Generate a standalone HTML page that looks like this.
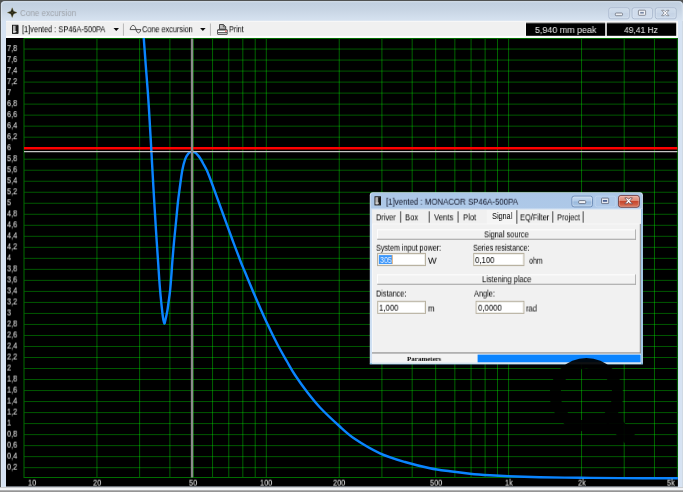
<!DOCTYPE html>
<html><head><meta charset="utf-8"><title>Cone excursion</title>
<style>
html,body{margin:0;padding:0;}
body{width:683px;height:492px;overflow:hidden;position:relative;background:#000;font-family:"Liberation Sans",sans-serif;}
svg{position:absolute;left:0;top:0;}
.t{position:absolute;white-space:nowrap;transform-origin:0 0;display:block;will-change:transform;}
</style></head>
<body>
<svg width="683" height="492" viewBox="0 0 683 492"><defs><linearGradient id="gt" x1="0" y1="0" x2="0" y2="1"><stop offset="0" stop-color="#bfcedf"/><stop offset=".45" stop-color="#c8d5e4"/><stop offset="1" stop-color="#d7e3f1"/></linearGradient><linearGradient id="gs" x1="0" y1="0" x2="0" y2="1"><stop offset="0" stop-color="#b6b6b6"/><stop offset="1" stop-color="#858585"/></linearGradient><linearGradient id="gb" x1="0" y1="0" x2="0" y2="1"><stop offset="0" stop-color="#cfdceb"/><stop offset=".5" stop-color="#c9d7e8"/><stop offset=".52" stop-color="#c5d3e5"/><stop offset="1" stop-color="#cbd9ea"/></linearGradient></defs><path d="M0,488 V0 H683.8 V488z" fill="#505252"/><path d="M0.95,487.3 V4.75 Q0.95,1.15 4.55,1.15 H679.2499999999999 Q682.8499999999999,1.15 682.8499999999999,4.75 V487.3z" fill="#d6e3f3"/><path d="M0.95,21 V4.75 Q0.95,1.15 4.55,1.15 H679.2499999999999 Q682.8499999999999,1.15 682.8499999999999,4.75 V21z" fill="url(#gt)"/><path d="M1.55,487 V5.35 Q1.55,1.75 5.15,1.75 H678.65 Q682.25,1.75 682.25,5.35 V487" fill="none" stroke="#e8eef6" stroke-opacity=".55" stroke-width="1"/><rect x="0.00" y="487.30" width="683.00" height="3.40" fill="#f1f3f6" /><rect x="0.00" y="490.50" width="683.00" height="1.50" fill="url(#gs)" /><rect x="6.00" y="37.00" width="671.90" height="449.50" fill="#000" /><rect x="6.00" y="20.90" width="671.90" height="17.00" fill="#f0f0f0" /><rect x="6.00" y="20.90" width="671.90" height="1.10" fill="#f7f7f7" /><rect x="6.00" y="35.90" width="671.90" height="1.95" fill="#ffffff" /><rect x="524.90" y="21.80" width="153.00" height="16.05" fill="#fafafa" /><rect x="526.00" y="22.30" width="79.20" height="1.30" fill="#9a9a9a" /><rect x="526.00" y="23.30" width="79.20" height="12.50" fill="#000" /><rect x="606.80" y="22.30" width="69.40" height="1.30" fill="#9a9a9a" /><rect x="606.80" y="23.30" width="69.40" height="12.50" fill="#000" /><rect x="608.85" y="7.85" width="20.40" height="10.9" rx="2" fill="url(#gb)" stroke="#a7b6cc" stroke-width="0.9"/><rect x="609.6999999999999" y="8.7" width="18.70" height="9.2" rx="1.3" fill="none" stroke="#e6eef8" stroke-opacity=".55" stroke-width="0.7"/><rect x="632.1500000000001" y="7.85" width="20.20" height="10.9" rx="2" fill="#d0dcec" stroke="#a7b6cc" stroke-width="0.9"/><rect x="633.0" y="8.7" width="18.50" height="9.2" rx="1.3" fill="none" stroke="#e6eef8" stroke-opacity=".55" stroke-width="0.7"/><rect x="655.35" y="7.85" width="20.80" height="10.9" rx="2" fill="url(#gb)" stroke="#a7b6cc" stroke-width="0.9"/><rect x="656.1999999999999" y="8.7" width="19.10" height="9.2" rx="1.3" fill="none" stroke="#e6eef8" stroke-opacity=".55" stroke-width="0.7"/><rect x="615.3" y="13.0" width="7.2" height="2.7" rx="0.9" fill="#eef1f6" stroke="#6a707c" stroke-width="0.8"/><rect x="638.4" y="10.2" width="7.2" height="5.1" rx="0.7" fill="#f2f4f8" stroke="#70747e" stroke-width="0.8"/><rect x="640.2" y="11.9" width="3.6" height="1.7" fill="#7686a4"/><path d="M661.6,10.3 l2.4,0 l1.3,1.4 l1.3,-1.4 l2.4,0 l-2.5,2.7 l2.5,2.7 l-2.4,0 l-1.3,-1.4 l-1.3,1.4 l-2.4,0 l2.5,-2.7z" fill="#fbfbfd" stroke="#7a7e88" stroke-width="0.8" stroke-linejoin="round"/><g transform="translate(12.2,12.6)"><path d="M0,-4.8 L1.35,-1.35 L4.8,0 L1.35,1.35 L0,4.8 L-1.35,1.35 L-4.8,0 L-1.35,-1.35Z" fill="#22221a" stroke="#6e6830" stroke-width="0.4"/><circle r="0.9" fill="#4c481c"/></g><rect x="12.50" y="25.30" width="5.40" height="8.10" fill="#8a8a8a" stroke="#1c1c1c" stroke-width="1"/><rect x="13.00" y="25.80" width="2.30" height="7.10" fill="#b4b4b4"/><rect x="15.69" y="25.80" width="2.56" height="7.10" fill="#1a1a1a"/><rect x="13.20" y="31.10" width="3.20" height="1" fill="#e0e0e0"/><path d="M113.5,27.9 h5.5 l-2.75,3.1z" fill="#0c0c0c"/><path d="M200.1,27.9 h5.5 l-2.75,3.1z" fill="#0c0c0c"/><path d="M130.1,29.6 C131.2,24.0 135.0,24.0 136.0,29.5 C137.0,33.9 139.9,33.9 140.8,29.7 M130.1,29.6 H140.9" fill="none" stroke="#4a4a4a" stroke-width="0.95"/><path d="M219.5,29.2 v-4.7 h3.9 l2.3,2.2 v2.5z" fill="#bdbdbd" stroke="#3a3a3a" stroke-width="0.9"/><path d="M223.3,24.6 v2.3 h2.3" fill="none" stroke="#3a3a3a" stroke-width="0.7"/><rect x="217.2" y="29.2" width="10.4" height="5.6" rx="1" fill="#3a3a3a"/><rect x="218.0" y="30.5" width="8.8" height="1.5" fill="#fff"/><rect x="225.0" y="30.5" width="1.7" height="1.3" fill="#f07070"/><rect x="218.0" y="32.7" width="8.8" height="1.3" fill="#c8c8c8"/><rect x="122.95" y="23.50" width="0.90" height="12.20" fill="#b2b2b2" /><rect x="209.95" y="23.50" width="0.90" height="12.20" fill="#b2b2b2" /><defs><clipPath id="pc"><rect x="6" y="37.9" width="671.9" height="448.6"/></clipPath></defs><g clip-path="url(#pc)"><g stroke="#006200" stroke-width="1" fill="none"><line x1="96.94" y1="38.5" x2="96.94" y2="477.5"/><line x1="139.61" y1="38.5" x2="139.61" y2="477.5"/><line x1="169.88" y1="38.5" x2="169.88" y2="477.5"/><line x1="193.36" y1="38.5" x2="193.36" y2="477.5"/><line x1="212.55" y1="38.5" x2="212.55" y2="477.5"/><line x1="228.77" y1="38.5" x2="228.77" y2="477.5"/><line x1="242.82" y1="38.5" x2="242.82" y2="477.5"/><line x1="255.21" y1="38.5" x2="255.21" y2="477.5"/><line x1="266.30" y1="38.5" x2="266.30" y2="477.5"/><line x1="339.24" y1="38.5" x2="339.24" y2="477.5"/><line x1="381.91" y1="38.5" x2="381.91" y2="477.5"/><line x1="412.18" y1="38.5" x2="412.18" y2="477.5"/><line x1="435.66" y1="38.5" x2="435.66" y2="477.5"/><line x1="454.85" y1="38.5" x2="454.85" y2="477.5"/><line x1="471.07" y1="38.5" x2="471.07" y2="477.5"/><line x1="485.12" y1="38.5" x2="485.12" y2="477.5"/><line x1="497.51" y1="38.5" x2="497.51" y2="477.5"/><line x1="508.60" y1="38.5" x2="508.60" y2="477.5"/><line x1="581.54" y1="38.5" x2="581.54" y2="477.5"/><line x1="624.21" y1="38.5" x2="624.21" y2="477.5"/><line x1="654.48" y1="38.5" x2="654.48" y2="477.5"/></g><g stroke="#005800" stroke-width="1" fill="none" style="mix-blend-mode:screen"><line x1="24.0" y1="467.66" x2="677.4" y2="467.66"/><line x1="24.0" y1="456.64" x2="677.4" y2="456.64"/><line x1="24.0" y1="445.63" x2="677.4" y2="445.63"/><line x1="24.0" y1="434.61" x2="677.4" y2="434.61"/><line x1="24.0" y1="423.59" x2="677.4" y2="423.59"/><line x1="24.0" y1="412.58" x2="677.4" y2="412.58"/><line x1="24.0" y1="401.56" x2="677.4" y2="401.56"/><line x1="24.0" y1="390.55" x2="677.4" y2="390.55"/><line x1="24.0" y1="379.53" x2="677.4" y2="379.53"/><line x1="24.0" y1="368.51" x2="677.4" y2="368.51"/><line x1="24.0" y1="357.50" x2="677.4" y2="357.50"/><line x1="24.0" y1="346.48" x2="677.4" y2="346.48"/><line x1="24.0" y1="335.47" x2="677.4" y2="335.47"/><line x1="24.0" y1="324.45" x2="677.4" y2="324.45"/><line x1="24.0" y1="313.43" x2="677.4" y2="313.43"/><line x1="24.0" y1="302.42" x2="677.4" y2="302.42"/><line x1="24.0" y1="291.40" x2="677.4" y2="291.40"/><line x1="24.0" y1="280.39" x2="677.4" y2="280.39"/><line x1="24.0" y1="269.37" x2="677.4" y2="269.37"/><line x1="24.0" y1="258.35" x2="677.4" y2="258.35"/><line x1="24.0" y1="247.34" x2="677.4" y2="247.34"/><line x1="24.0" y1="236.32" x2="677.4" y2="236.32"/><line x1="24.0" y1="225.31" x2="677.4" y2="225.31"/><line x1="24.0" y1="214.29" x2="677.4" y2="214.29"/><line x1="24.0" y1="203.27" x2="677.4" y2="203.27"/><line x1="24.0" y1="192.26" x2="677.4" y2="192.26"/><line x1="24.0" y1="181.24" x2="677.4" y2="181.24"/><line x1="24.0" y1="170.23" x2="677.4" y2="170.23"/><line x1="24.0" y1="159.21" x2="677.4" y2="159.21"/><line x1="24.0" y1="148.19" x2="677.4" y2="148.19"/><line x1="24.0" y1="137.18" x2="677.4" y2="137.18"/><line x1="24.0" y1="126.16" x2="677.4" y2="126.16"/><line x1="24.0" y1="115.15" x2="677.4" y2="115.15"/><line x1="24.0" y1="104.13" x2="677.4" y2="104.13"/><line x1="24.0" y1="93.11" x2="677.4" y2="93.11"/><line x1="24.0" y1="82.10" x2="677.4" y2="82.10"/><line x1="24.0" y1="71.08" x2="677.4" y2="71.08"/><line x1="24.0" y1="60.07" x2="677.4" y2="60.07"/><line x1="24.0" y1="49.05" x2="677.4" y2="49.05"/></g><rect x="24.0" y="38.5" width="653.4" height="439.0" stroke="#006c00" stroke-width="1" fill="none"/><line x1="24.0" y1="148.3" x2="677.4" y2="148.3" stroke="#ff0000" stroke-width="2.6"/><path d="M143.60,36.00C143.97,41.00 145.07,56.27 145.80,66.00C146.53,75.73 147.37,85.40 148.00,94.40C148.63,103.40 149.07,111.07 149.60,120.00C150.13,128.93 150.68,138.83 151.20,148.00C151.72,157.17 152.20,166.17 152.70,175.00C153.20,183.83 153.63,191.50 154.20,201.00C154.77,210.50 155.45,221.83 156.10,232.00C156.75,242.17 157.57,254.00 158.10,262.00C158.63,270.00 158.95,275.10 159.30,280.00C159.65,284.90 159.87,287.57 160.20,291.40C160.53,295.23 160.93,299.40 161.30,303.00C161.67,306.60 162.07,310.25 162.40,313.00C162.73,315.75 162.98,317.73 163.30,319.50C163.62,321.27 163.97,323.43 164.30,323.60C164.63,323.77 164.97,321.77 165.30,320.50C165.63,319.23 165.93,317.75 166.30,316.00C166.67,314.25 167.10,312.50 167.50,310.00C167.90,307.50 168.28,304.10 168.70,301.00C169.12,297.90 169.55,295.73 170.00,291.40C170.45,287.07 171.02,279.90 171.40,275.00C171.78,270.10 171.83,267.83 172.30,262.00C172.77,256.17 173.55,247.00 174.20,240.00C174.85,233.00 175.57,226.42 176.20,220.00C176.83,213.58 177.43,206.67 178.00,201.50C178.57,196.33 178.88,194.20 179.60,189.00C180.32,183.80 181.38,175.25 182.30,170.30C183.22,165.35 184.12,162.05 185.10,159.30C186.08,156.55 187.25,155.03 188.20,153.80C189.15,152.57 190.07,152.25 190.80,151.90C191.53,151.55 191.90,151.58 192.60,151.70C193.30,151.82 194.10,151.98 195.00,152.60C195.90,153.22 197.07,154.33 198.00,155.40C198.93,156.47 199.77,157.70 200.60,159.00C201.43,160.30 201.95,161.27 203.00,163.20C204.05,165.13 205.32,166.97 206.90,170.60C208.48,174.23 209.90,178.02 212.50,185.00C215.10,191.98 219.17,203.33 222.50,212.50C225.83,221.67 229.42,231.67 232.50,240.00C235.58,248.33 238.92,257.17 241.00,262.50C243.08,267.83 242.67,266.42 245.00,272.00C247.33,277.58 251.46,287.75 255.00,296.00C258.54,304.25 262.50,313.42 266.25,321.50C270.00,329.58 274.04,337.83 277.50,344.50C280.96,351.17 284.08,356.42 287.00,361.50C289.92,366.58 291.58,369.83 295.00,375.00C298.42,380.17 303.33,387.08 307.50,392.50C311.67,397.92 314.79,402.00 320.00,407.50C325.21,413.00 332.92,420.25 338.75,425.50C344.58,430.75 348.12,434.37 355.00,439.00C361.88,443.63 371.67,449.47 380.00,453.30C388.33,457.13 396.67,459.52 405.00,462.00C413.33,464.48 422.50,466.65 430.00,468.20C437.50,469.75 443.33,470.38 450.00,471.30C456.67,472.22 463.33,473.03 470.00,473.70C476.67,474.37 483.58,474.87 490.00,475.30C496.42,475.73 500.17,475.98 508.50,476.30C516.83,476.62 527.92,476.95 540.00,477.20C552.08,477.45 567.67,477.65 581.00,477.80C594.33,477.95 608.50,478.03 620.00,478.10C631.50,478.18 640.33,478.22 650.00,478.25C659.67,478.28 673.33,478.29 678.00,478.30" fill="none" stroke="#0a84ff" stroke-width="2.4" stroke-linejoin="round" stroke-linecap="butt"/><line x1="24.0" y1="151.6" x2="677.4" y2="151.6" stroke="#c4c4c4" stroke-width="1.1"/><line x1="192.0" y1="38.5" x2="192.0" y2="477.5" stroke="#8a8a8a" stroke-width="2.3"/></g></svg>
<span class="t" style="left:20.40px;top:7px;font-size:9.3px;line-height:12px;color:#9fa4ab;font-family:'Liberation Sans',sans-serif;transform:translateY(0.05px) scale(0.8697,1.05);">Cone excursion</span>
<span class="t" style="left:22.20px;top:23px;font-size:9.3px;line-height:12px;color:#000;font-family:'Liberation Sans',sans-serif;transform:translateY(0.25px) scale(0.7920,1.05);">[1]vented : SP46A-500PA</span>
<span class="t" style="left:142.10px;top:23px;font-size:9.3px;line-height:12px;color:#000;font-family:'Liberation Sans',sans-serif;transform:translateY(0.25px) scale(0.7846,1.05);">Cone excursion</span>
<span class="t" style="left:229.30px;top:23px;font-size:9.3px;line-height:12px;color:#000;font-family:'Liberation Sans',sans-serif;transform:translateY(0.25px) scale(0.7635,1.05);">Print</span>
<span class="t" style="left:534.60px;top:23px;font-size:9.9px;line-height:13px;color:#dadada;font-family:'Liberation Sans',sans-serif;transform:translateY(0.00px) scale(0.8998,1.0);-webkit-text-stroke:0.12px #dadada;">5,940 mm peak</span>
<span class="t" style="left:624.20px;top:23px;font-size:9.9px;line-height:13px;color:#dadada;font-family:'Liberation Sans',sans-serif;transform:translateY(0.00px) scale(0.8580,1.0);-webkit-text-stroke:0.12px #dadada;">49,41 Hz</span>
<span class="t" style="left:7.40px;top:460px;font-size:9.3px;line-height:12px;color:#d2d2d2;font-family:'Liberation Sans',sans-serif;transform:translateY(0.69px) scale(0.7900,1.03);-webkit-text-stroke:0.15px #d2d2d2;">0,2</span>
<span class="t" style="left:7.40px;top:449px;font-size:9.3px;line-height:12px;color:#d2d2d2;font-family:'Liberation Sans',sans-serif;transform:translateY(0.67px) scale(0.7900,1.03);-webkit-text-stroke:0.15px #d2d2d2;">0,4</span>
<span class="t" style="left:7.40px;top:438px;font-size:9.3px;line-height:12px;color:#d2d2d2;font-family:'Liberation Sans',sans-serif;transform:translateY(0.66px) scale(0.7900,1.03);-webkit-text-stroke:0.15px #d2d2d2;">0,6</span>
<span class="t" style="left:7.40px;top:427px;font-size:9.3px;line-height:12px;color:#d2d2d2;font-family:'Liberation Sans',sans-serif;transform:translateY(0.64px) scale(0.7900,1.03);-webkit-text-stroke:0.15px #d2d2d2;">0,8</span>
<span class="t" style="left:7.40px;top:416px;font-size:9.3px;line-height:12px;color:#d2d2d2;font-family:'Liberation Sans',sans-serif;transform:translateY(0.62px) scale(0.7900,1.03);-webkit-text-stroke:0.15px #d2d2d2;">1</span>
<span class="t" style="left:7.40px;top:405px;font-size:9.3px;line-height:12px;color:#d2d2d2;font-family:'Liberation Sans',sans-serif;transform:translateY(0.61px) scale(0.7900,1.03);-webkit-text-stroke:0.15px #d2d2d2;">1,2</span>
<span class="t" style="left:7.40px;top:394px;font-size:9.3px;line-height:12px;color:#d2d2d2;font-family:'Liberation Sans',sans-serif;transform:translateY(0.59px) scale(0.7900,1.03);-webkit-text-stroke:0.15px #d2d2d2;">1,4</span>
<span class="t" style="left:7.40px;top:383px;font-size:9.3px;line-height:12px;color:#d2d2d2;font-family:'Liberation Sans',sans-serif;transform:translateY(0.58px) scale(0.7900,1.03);-webkit-text-stroke:0.15px #d2d2d2;">1,6</span>
<span class="t" style="left:7.40px;top:372px;font-size:9.3px;line-height:12px;color:#d2d2d2;font-family:'Liberation Sans',sans-serif;transform:translateY(0.56px) scale(0.7900,1.03);-webkit-text-stroke:0.15px #d2d2d2;">1,8</span>
<span class="t" style="left:7.40px;top:361px;font-size:9.3px;line-height:12px;color:#d2d2d2;font-family:'Liberation Sans',sans-serif;transform:translateY(0.54px) scale(0.7900,1.03);-webkit-text-stroke:0.15px #d2d2d2;">2</span>
<span class="t" style="left:7.40px;top:350px;font-size:9.3px;line-height:12px;color:#d2d2d2;font-family:'Liberation Sans',sans-serif;transform:translateY(0.53px) scale(0.7900,1.03);-webkit-text-stroke:0.15px #d2d2d2;">2,2</span>
<span class="t" style="left:7.40px;top:339px;font-size:9.3px;line-height:12px;color:#d2d2d2;font-family:'Liberation Sans',sans-serif;transform:translateY(0.51px) scale(0.7900,1.03);-webkit-text-stroke:0.15px #d2d2d2;">2,4</span>
<span class="t" style="left:7.40px;top:328px;font-size:9.3px;line-height:12px;color:#d2d2d2;font-family:'Liberation Sans',sans-serif;transform:translateY(0.50px) scale(0.7900,1.03);-webkit-text-stroke:0.15px #d2d2d2;">2,6</span>
<span class="t" style="left:7.40px;top:317px;font-size:9.3px;line-height:12px;color:#d2d2d2;font-family:'Liberation Sans',sans-serif;transform:translateY(0.48px) scale(0.7900,1.03);-webkit-text-stroke:0.15px #d2d2d2;">2,8</span>
<span class="t" style="left:7.40px;top:306px;font-size:9.3px;line-height:12px;color:#d2d2d2;font-family:'Liberation Sans',sans-serif;transform:translateY(0.46px) scale(0.7900,1.03);-webkit-text-stroke:0.15px #d2d2d2;">3</span>
<span class="t" style="left:7.40px;top:295px;font-size:9.3px;line-height:12px;color:#d2d2d2;font-family:'Liberation Sans',sans-serif;transform:translateY(0.45px) scale(0.7900,1.03);-webkit-text-stroke:0.15px #d2d2d2;">3,2</span>
<span class="t" style="left:7.40px;top:284px;font-size:9.3px;line-height:12px;color:#d2d2d2;font-family:'Liberation Sans',sans-serif;transform:translateY(0.43px) scale(0.7900,1.03);-webkit-text-stroke:0.15px #d2d2d2;">3,4</span>
<span class="t" style="left:7.40px;top:273px;font-size:9.3px;line-height:12px;color:#d2d2d2;font-family:'Liberation Sans',sans-serif;transform:translateY(0.42px) scale(0.7900,1.03);-webkit-text-stroke:0.15px #d2d2d2;">3,6</span>
<span class="t" style="left:7.40px;top:262px;font-size:9.3px;line-height:12px;color:#d2d2d2;font-family:'Liberation Sans',sans-serif;transform:translateY(0.40px) scale(0.7900,1.03);-webkit-text-stroke:0.15px #d2d2d2;">3,8</span>
<span class="t" style="left:7.40px;top:251px;font-size:9.3px;line-height:12px;color:#d2d2d2;font-family:'Liberation Sans',sans-serif;transform:translateY(0.38px) scale(0.7900,1.03);-webkit-text-stroke:0.15px #d2d2d2;">4</span>
<span class="t" style="left:7.40px;top:240px;font-size:9.3px;line-height:12px;color:#d2d2d2;font-family:'Liberation Sans',sans-serif;transform:translateY(0.37px) scale(0.7900,1.03);-webkit-text-stroke:0.15px #d2d2d2;">4,2</span>
<span class="t" style="left:7.40px;top:229px;font-size:9.3px;line-height:12px;color:#d2d2d2;font-family:'Liberation Sans',sans-serif;transform:translateY(0.35px) scale(0.7900,1.03);-webkit-text-stroke:0.15px #d2d2d2;">4,4</span>
<span class="t" style="left:7.40px;top:218px;font-size:9.3px;line-height:12px;color:#d2d2d2;font-family:'Liberation Sans',sans-serif;transform:translateY(0.34px) scale(0.7900,1.03);-webkit-text-stroke:0.15px #d2d2d2;">4,6</span>
<span class="t" style="left:7.40px;top:207px;font-size:9.3px;line-height:12px;color:#d2d2d2;font-family:'Liberation Sans',sans-serif;transform:translateY(0.32px) scale(0.7900,1.03);-webkit-text-stroke:0.15px #d2d2d2;">4,8</span>
<span class="t" style="left:7.40px;top:196px;font-size:9.3px;line-height:12px;color:#d2d2d2;font-family:'Liberation Sans',sans-serif;transform:translateY(0.30px) scale(0.7900,1.03);-webkit-text-stroke:0.15px #d2d2d2;">5</span>
<span class="t" style="left:7.40px;top:185px;font-size:9.3px;line-height:12px;color:#d2d2d2;font-family:'Liberation Sans',sans-serif;transform:translateY(0.29px) scale(0.7900,1.03);-webkit-text-stroke:0.15px #d2d2d2;">5,2</span>
<span class="t" style="left:7.40px;top:174px;font-size:9.3px;line-height:12px;color:#d2d2d2;font-family:'Liberation Sans',sans-serif;transform:translateY(0.27px) scale(0.7900,1.03);-webkit-text-stroke:0.15px #d2d2d2;">5,4</span>
<span class="t" style="left:7.40px;top:163px;font-size:9.3px;line-height:12px;color:#d2d2d2;font-family:'Liberation Sans',sans-serif;transform:translateY(0.26px) scale(0.7900,1.03);-webkit-text-stroke:0.15px #d2d2d2;">5,6</span>
<span class="t" style="left:7.40px;top:152px;font-size:9.3px;line-height:12px;color:#d2d2d2;font-family:'Liberation Sans',sans-serif;transform:translateY(0.24px) scale(0.7900,1.03);-webkit-text-stroke:0.15px #d2d2d2;">5,8</span>
<span class="t" style="left:7.40px;top:141px;font-size:9.3px;line-height:12px;color:#d2d2d2;font-family:'Liberation Sans',sans-serif;transform:translateY(0.22px) scale(0.7900,1.03);-webkit-text-stroke:0.15px #d2d2d2;">6</span>
<span class="t" style="left:7.40px;top:130px;font-size:9.3px;line-height:12px;color:#d2d2d2;font-family:'Liberation Sans',sans-serif;transform:translateY(0.21px) scale(0.7900,1.03);-webkit-text-stroke:0.15px #d2d2d2;">6,2</span>
<span class="t" style="left:7.40px;top:119px;font-size:9.3px;line-height:12px;color:#d2d2d2;font-family:'Liberation Sans',sans-serif;transform:translateY(0.19px) scale(0.7900,1.03);-webkit-text-stroke:0.15px #d2d2d2;">6,4</span>
<span class="t" style="left:7.40px;top:108px;font-size:9.3px;line-height:12px;color:#d2d2d2;font-family:'Liberation Sans',sans-serif;transform:translateY(0.18px) scale(0.7900,1.03);-webkit-text-stroke:0.15px #d2d2d2;">6,6</span>
<span class="t" style="left:7.40px;top:97px;font-size:9.3px;line-height:12px;color:#d2d2d2;font-family:'Liberation Sans',sans-serif;transform:translateY(0.16px) scale(0.7900,1.03);-webkit-text-stroke:0.15px #d2d2d2;">6,8</span>
<span class="t" style="left:7.40px;top:86px;font-size:9.3px;line-height:12px;color:#d2d2d2;font-family:'Liberation Sans',sans-serif;transform:translateY(0.14px) scale(0.7900,1.03);-webkit-text-stroke:0.15px #d2d2d2;">7</span>
<span class="t" style="left:7.40px;top:75px;font-size:9.3px;line-height:12px;color:#d2d2d2;font-family:'Liberation Sans',sans-serif;transform:translateY(0.13px) scale(0.7900,1.03);-webkit-text-stroke:0.15px #d2d2d2;">7,2</span>
<span class="t" style="left:7.40px;top:64px;font-size:9.3px;line-height:12px;color:#d2d2d2;font-family:'Liberation Sans',sans-serif;transform:translateY(0.11px) scale(0.7900,1.03);-webkit-text-stroke:0.15px #d2d2d2;">7,4</span>
<span class="t" style="left:7.40px;top:53px;font-size:9.3px;line-height:12px;color:#d2d2d2;font-family:'Liberation Sans',sans-serif;transform:translateY(0.10px) scale(0.7900,1.03);-webkit-text-stroke:0.15px #d2d2d2;">7,6</span>
<span class="t" style="left:7.40px;top:42px;font-size:9.3px;line-height:12px;color:#d2d2d2;font-family:'Liberation Sans',sans-serif;transform:translateY(0.08px) scale(0.7900,1.03);-webkit-text-stroke:0.15px #d2d2d2;">7,8</span>
<span class="t" style="left:27.50px;top:476px;font-size:9.3px;line-height:12px;color:#d2d2d2;font-family:'Liberation Sans',sans-serif;transform:translateY(0.63px) scale(0.7900,1.03);-webkit-text-stroke:0.15px #d2d2d2;">10</span>
<span class="t" style="left:93.05px;top:476px;font-size:9.3px;line-height:12px;color:#d2d2d2;font-family:'Liberation Sans',sans-serif;transform:translateY(0.63px) scale(0.7900,1.03);-webkit-text-stroke:0.15px #d2d2d2;">20</span>
<span class="t" style="left:189.47px;top:476px;font-size:9.3px;line-height:12px;color:#d2d2d2;font-family:'Liberation Sans',sans-serif;transform:translateY(0.63px) scale(0.7900,1.03);-webkit-text-stroke:0.15px #d2d2d2;">50</span>
<span class="t" style="left:260.37px;top:476px;font-size:9.3px;line-height:12px;color:#d2d2d2;font-family:'Liberation Sans',sans-serif;transform:translateY(0.63px) scale(0.7900,1.03);-webkit-text-stroke:0.15px #d2d2d2;">100</span>
<span class="t" style="left:333.31px;top:476px;font-size:9.3px;line-height:12px;color:#d2d2d2;font-family:'Liberation Sans',sans-serif;transform:translateY(0.63px) scale(0.7900,1.03);-webkit-text-stroke:0.15px #d2d2d2;">200</span>
<span class="t" style="left:429.73px;top:476px;font-size:9.3px;line-height:12px;color:#d2d2d2;font-family:'Liberation Sans',sans-serif;transform:translateY(0.63px) scale(0.7900,1.03);-webkit-text-stroke:0.15px #d2d2d2;">500</span>
<span class="t" style="left:504.92px;top:476px;font-size:9.3px;line-height:12px;color:#d2d2d2;font-family:'Liberation Sans',sans-serif;transform:translateY(0.63px) scale(0.7900,1.03);-webkit-text-stroke:0.15px #d2d2d2;">1k</span>
<span class="t" style="left:577.86px;top:476px;font-size:9.3px;line-height:12px;color:#d2d2d2;font-family:'Liberation Sans',sans-serif;transform:translateY(0.63px) scale(0.7900,1.03);-webkit-text-stroke:0.15px #d2d2d2;">2k</span>
<span class="t" style="left:667.24px;top:476px;font-size:9.3px;line-height:12px;color:#d2d2d2;font-family:'Liberation Sans',sans-serif;transform:translateY(0.63px) scale(0.7900,1.03);-webkit-text-stroke:0.15px #d2d2d2;">5k</span>
<svg width="683" height="492" viewBox="0 0 683 492"><defs><linearGradient id="dt" x1="0" y1="0" x2="0" y2="1"><stop offset="0" stop-color="#acc7e7"/><stop offset="1" stop-color="#bfd7f0"/></linearGradient><linearGradient id="db1" x1="0" y1="0" x2="0" y2="1"><stop offset="0" stop-color="#c8dbf1"/><stop offset=".48" stop-color="#b0cae8"/><stop offset=".52" stop-color="#98b8dc"/><stop offset="1" stop-color="#aec9e7"/></linearGradient><linearGradient id="db3" x1="0" y1="0" x2="0" y2="1"><stop offset="0" stop-color="#eab0a4"/><stop offset=".46" stop-color="#dc8672"/><stop offset=".5" stop-color="#c6452c"/><stop offset="1" stop-color="#d8745a"/></linearGradient></defs><path d="M369.8,364.3 V195.2 Q369.8,192.2 372.8,192.2 H639.9 Q642.9,192.2 642.9,195.2 V364.3z" fill="#d6e4f3"/><path d="M370.6,363.6 V195.39999999999998 Q370.6,193.0 373.0,193.0 H639.6999999999999 Q642.1,193.0 642.1,195.39999999999998 V363.6z" fill="url(#dt)"/><rect x="370.60" y="208.40" width="271.50" height="155.20" fill="#cfe0f3" /><rect x="641.00" y="209.00" width="1.60" height="155.00" fill="#9cc3e6" /><rect x="369.80" y="363.40" width="273.10" height="0.90" fill="#62b4dc" /><rect x="372.00" y="209.50" width="269.00" height="153.90" fill="#f0f0f0" /><rect x="486.70" y="210.00" width="30.30" height="14.20" fill="#f5f5f5" /><rect x="372.00" y="223.90" width="268.90" height="129.80" fill="#f1f1f1" /><rect x="372.20" y="223.60" width="267.80" height="0.80" fill="#fafafa" /><rect x="372.00" y="223.90" width="0.80" height="129.10" fill="#fafafa" /><rect x="639.80" y="223.90" width="1.10" height="129.80" fill="#8c8c8c" /><rect x="372.00" y="352.40" width="268.90" height="1.30" fill="#878787" /><rect x="399.95" y="211.30" width="1.30" height="11.40" fill="#707070" /><rect x="428.65" y="211.30" width="1.30" height="11.40" fill="#707070" /><rect x="457.45" y="211.30" width="1.30" height="11.40" fill="#707070" /><rect x="552.05" y="211.30" width="1.30" height="11.40" fill="#707070" /><rect x="582.55" y="211.30" width="1.30" height="11.40" fill="#707070" /><rect x="516.15" y="210.20" width="1.30" height="13.60" fill="#707070" /><rect x="377.20" y="229.40" width="258.80" height="10.50" fill="#f2f2f2" /><rect x="377.20" y="229.40" width="258.80" height="0.90" fill="#ffffff" /><rect x="377.20" y="229.40" width="0.80" height="10.50" fill="#ffffff" /><rect x="377.20" y="238.70" width="258.80" height="1.20" fill="#adadad" /><rect x="635.10" y="229.40" width="0.90" height="10.50" fill="#adadad" /><rect x="377.20" y="274.40" width="258.80" height="10.50" fill="#f2f2f2" /><rect x="377.20" y="274.40" width="258.80" height="0.90" fill="#ffffff" /><rect x="377.20" y="274.40" width="0.80" height="10.50" fill="#ffffff" /><rect x="377.20" y="283.70" width="258.80" height="1.20" fill="#adadad" /><rect x="635.10" y="274.40" width="0.90" height="10.50" fill="#adadad" /><rect x="377.55" y="253.45" width="47.90" height="12.10" fill="#fff" stroke="#b9b2a1" stroke-width="1.1"/><rect x="378.50" y="254.40" width="46.00" height="10.20" fill="none" stroke="#ecebe6" stroke-width="0.8"/><rect x="473.75" y="253.45" width="50.10" height="12.10" fill="#fff" stroke="#b9b2a1" stroke-width="1.1"/><rect x="474.70" y="254.40" width="48.20" height="10.20" fill="none" stroke="#ecebe6" stroke-width="0.8"/><rect x="377.75" y="301.35" width="47.70" height="12.00" fill="#fff" stroke="#b9b2a1" stroke-width="1.1"/><rect x="378.70" y="302.30" width="45.80" height="10.10" fill="none" stroke="#ecebe6" stroke-width="0.8"/><rect x="476.15" y="301.35" width="47.70" height="12.00" fill="#fff" stroke="#b9b2a1" stroke-width="1.1"/><rect x="477.10" y="302.30" width="45.80" height="10.10" fill="none" stroke="#ecebe6" stroke-width="0.8"/><rect x="378.90" y="255.10" width="13.30" height="8.90" fill="#3a96fb" /><rect x="391.80" y="255.10" width="0.90" height="8.90" fill="#e9a562" /><rect x="372.00" y="353.70" width="269.00" height="9.70" fill="#f3f3f3" /><rect x="372.00" y="362.30" width="269.00" height="1.10" fill="#dfe7ee" /><rect x="477.60" y="354.60" width="163.00" height="7.70" fill="#0a84ff" /><rect x="375.00" y="196.80" width="5.50" height="8.10" fill="#8a8a8a" stroke="#1c1c1c" stroke-width="1"/><rect x="375.50" y="197.30" width="2.34" height="7.10" fill="#b4b4b4"/><rect x="378.23" y="197.30" width="2.60" height="7.10" fill="#1a1a1a"/><rect x="375.70" y="202.60" width="3.25" height="1" fill="#e0e0e0"/><rect x="571.9" y="196.15" width="20.6" height="10.7" rx="2.2" fill="url(#db1)" stroke="#6787b2" stroke-width="0.9"/><rect x="572.8" y="197.0" width="18.8" height="9.0" rx="1.4" fill="none" stroke="#e8f1fb" stroke-opacity=".6" stroke-width="0.7"/><rect x="595.2" y="196.15" width="20.6" height="10.7" rx="2.2" fill="#afc9e8" stroke="#bfd5ee" stroke-width="0.9"/><rect x="618.45" y="195.45" width="20.9" height="11.8" rx="2.4" fill="url(#db3)" stroke="#6a3a3c" stroke-width="0.9"/><rect x="619.4" y="196.4" width="19.0" height="9.9" rx="1.5" fill="none" stroke="#f6cfc6" stroke-opacity=".55" stroke-width="0.7"/><rect x="578.7" y="200.6" width="7.0" height="3.0" rx="0.9" fill="#f0f2f6" stroke="#555e70" stroke-width="0.8"/><rect x="601.5" y="198.1" width="7.2" height="5.5" rx="0.7" fill="#e4e8f0" stroke="#5a6478" stroke-width="0.8"/><rect x="602.9" y="200.0" width="4.2" height="1.8" fill="#4e6494"/><path d="M624.8,197.9 l2.5,0 l1.3,1.45 l1.3,-1.45 l2.5,0 l-2.55,2.95 l2.55,2.95 l-2.5,0 l-1.3,-1.45 l-1.3,1.45 l-2.5,0 l2.55,-2.95z" fill="#ffffff" stroke="#6a464c" stroke-width="0.8" stroke-linejoin="round"/></svg>
<span class="t" style="left:386.00px;top:195px;font-size:9.3px;line-height:12px;color:#101326;font-family:'Liberation Sans',sans-serif;transform:translateY(0.75px) scale(0.8437,1.05);">[1]vented : MONACOR SP46A-500PA</span>
<span class="t" style="left:376.20px;top:211px;font-size:9.3px;line-height:12px;color:#000;font-family:'Liberation Sans',sans-serif;transform:translateY(0.35px) scale(0.7944,1.05);">Driver</span>
<span class="t" style="left:405.20px;top:211px;font-size:9.3px;line-height:12px;color:#000;font-family:'Liberation Sans',sans-serif;transform:translateY(0.35px) scale(0.8237,1.05);">Box</span>
<span class="t" style="left:433.60px;top:211px;font-size:9.3px;line-height:12px;color:#000;font-family:'Liberation Sans',sans-serif;transform:translateY(0.35px) scale(0.8380,1.05);">Vents</span>
<span class="t" style="left:462.60px;top:211px;font-size:9.3px;line-height:12px;color:#000;font-family:'Liberation Sans',sans-serif;transform:translateY(0.35px) scale(0.8237,1.05);">Plot</span>
<span class="t" style="left:491.60px;top:209px;font-size:9.3px;line-height:12px;color:#000;font-family:'Liberation Sans',sans-serif;transform:translateY(0.95px) scale(0.7852,1.05);">Signal</span>
<span class="t" style="left:520.20px;top:211px;font-size:9.3px;line-height:12px;color:#000;font-family:'Liberation Sans',sans-serif;transform:translateY(0.35px) scale(0.7959,1.05);">EQ/Filter</span>
<span class="t" style="left:557.10px;top:211px;font-size:9.3px;line-height:12px;color:#000;font-family:'Liberation Sans',sans-serif;transform:translateY(0.35px) scale(0.7981,1.05);">Project</span>
<span class="t" style="left:484.20px;top:228px;font-size:9.3px;line-height:12px;color:#000;font-family:'Liberation Sans',sans-serif;transform:translateY(0.35px) scale(0.7932,1.05);">Signal source</span>
<span class="t" style="left:481.60px;top:273px;font-size:9.3px;line-height:12px;color:#000;font-family:'Liberation Sans',sans-serif;transform:translateY(0.25px) scale(0.7962,1.05);">Listening place</span>
<span class="t" style="left:376.10px;top:241px;font-size:9.3px;line-height:12px;color:#000;font-family:'Liberation Sans',sans-serif;transform:translateY(0.75px) scale(0.7726,1.05);">System input power:</span>
<span class="t" style="left:473.20px;top:241px;font-size:9.3px;line-height:12px;color:#000;font-family:'Liberation Sans',sans-serif;transform:translateY(0.75px) scale(0.7630,1.05);">Series resistance:</span>
<span class="t" style="left:375.80px;top:287px;font-size:9.3px;line-height:12px;color:#000;font-family:'Liberation Sans',sans-serif;transform:translateY(0.55px) scale(0.7842,1.05);">Distance:</span>
<span class="t" style="left:474.10px;top:287px;font-size:9.3px;line-height:12px;color:#000;font-family:'Liberation Sans',sans-serif;transform:translateY(0.55px) scale(0.7925,1.05);">Angle:</span>
<span class="t" style="left:379.80px;top:254px;font-size:9.3px;line-height:12px;color:#eaf3ff;font-family:'Liberation Sans',sans-serif;transform:translateY(0.05px) scale(0.7604,1.05);">305</span>
<span class="t" style="left:475.10px;top:254px;font-size:9.3px;line-height:12px;color:#000;font-family:'Liberation Sans',sans-serif;transform:translateY(0.05px) scale(0.8379,1.05);">0,100</span>
<span class="t" style="left:379.20px;top:301px;font-size:9.3px;line-height:12px;color:#000;font-family:'Liberation Sans',sans-serif;transform:translateY(0.75px) scale(0.8379,1.05);">1,000</span>
<span class="t" style="left:477.60px;top:301px;font-size:9.3px;line-height:12px;color:#000;font-family:'Liberation Sans',sans-serif;transform:translateY(0.75px) scale(0.8367,1.05);">0,0000</span>
<span class="t" style="left:427.80px;top:254px;font-size:9.3px;line-height:12px;color:#000;font-family:'Liberation Sans',sans-serif;transform:translateY(0.65px) scale(0.9798,1.05);">W</span>
<span class="t" style="left:528.60px;top:254px;font-size:9.3px;line-height:12px;color:#000;font-family:'Liberation Sans',sans-serif;transform:translateY(0.75px) scale(0.7517,1.05);">ohm</span>
<span class="t" style="left:427.60px;top:302px;font-size:9.3px;line-height:12px;color:#000;font-family:'Liberation Sans',sans-serif;transform:translateY(0.45px) scale(0.8519,1.05);">m</span>
<span class="t" style="left:526.40px;top:302px;font-size:9.3px;line-height:12px;color:#000;font-family:'Liberation Sans',sans-serif;transform:translateY(0.45px) scale(0.8109,1.05);">rad</span>
<span class="t" style="left:407.10px;top:353px;font-size:7.0px;line-height:10px;color:#000;font-family:'Liberation Serif',serif;font-weight:bold;transform:translateY(0.90px) scale(0.9887,1.0);">Parameters</span>
<svg width="683" height="492" viewBox="0 0 683 492"><g fill="#000" fill-opacity="0.93"><path fill-rule="evenodd" d="M549.6999999999999,394.7 a36.7,36.7 0 1,0 73.4,0 a36.7,36.7 0 1,0 -73.4,0z M560.6,394.7 a25.8,25.8 0 1,0 51.6,0 a25.8,25.8 0 1,0 -51.6,0z"/><path d="M615.89,414.29 L635.40,433.80 L625.50,443.70 L605.99,424.19z"/></g></svg>
</body></html>
